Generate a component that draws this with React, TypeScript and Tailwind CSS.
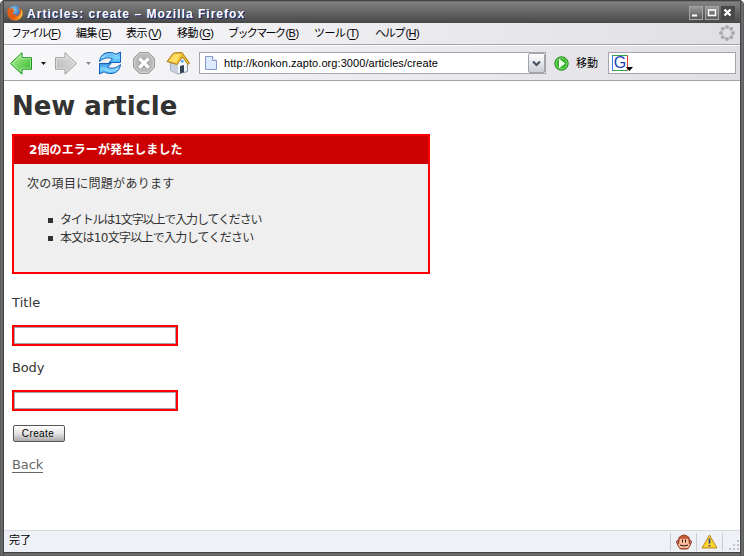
import type { ReactNode } from "react";

const menus: { label: string; k: string; w: string; t: string }[] = [
  { label: "ファイル", k: "F", w: "w-[65px]", t: "tracking-[-2px]" },
  { label: "編集", k: "E", w: "w-[50px]", t: "tracking-[-0.5px]" },
  { label: "表示", k: "V", w: "w-[51px]", t: "tracking-[-0.5px]" },
  { label: "移動", k: "G", w: "w-[51px]", t: "tracking-[-0.5px]" },
  { label: "ブックマーク", k: "B", w: "w-[86px]", t: "tracking-[-1.6px]" },
  { label: "ツール", k: "T", w: "w-[61px]", t: "tracking-[-0.6px]" },
  { label: "ヘルプ", k: "H", w: "w-[50px]", t: "tracking-[-1.2px]" },
];

function FirefoxLogo() {
  return (
    <svg width="16" height="16" viewBox="0 0 16 16" className="shrink-0">
      <defs>
        <radialGradient id="globe" cx=".4" cy=".3" r=".7">
          <stop offset="0" stopColor="#8fd0f2" />
          <stop offset="1" stopColor="#154a9c" />
        </radialGradient>
        <linearGradient id="fox" x1="0" y1="0" x2="1" y2="1">
          <stop offset="0" stopColor="#e8641b" />
          <stop offset=".6" stopColor="#e05a10" />
          <stop offset="1" stopColor="#ffc83a" />
        </linearGradient>
      </defs>
      <circle cx="8" cy="7.5" r="7" fill="url(#globe)" />
      <path d="M1.2 2.5 3 4c1-1 2.8-1 3.8-.4L5.8 5l2.4 1-2.6 1.5c.2 2 2.3 2.6 4.5 1.6L8.8 11c2.6 0 4.3-2.2 4-5.5L11.5 2c3 1.5 4.6 4 4.1 7.2C15 13.200 11.800 15.600 8 15.500 3.600 15.400.5 12.200.5 8c0-2.400.3-4 .7-5.500Z" fill="url(#fox)" />
      <path d="M13.300 4.500c2 3.500.5 7-2.800 8.500 3.500-.4 5.300-3.200 4.600-6.500Z" fill="#ffd34d" />
    </svg>
  );
}

function Arrow({ next = false }: { next?: boolean }) {
  return (
    <svg width="24" height="24" viewBox="0 0 24 24" className={next ? "shrink-0 -scale-x-100" : "shrink-0"}>
      <defs>
        <linearGradient id="ag" x2="1" y2="1">
          <stop stopColor="#b6f59b" /><stop offset="1" stopColor="#2fb526" />
        </linearGradient>
        <linearGradient id="an" x2="1" y2="1">
          <stop stopColor="#e4e4e4" /><stop offset="1" stopColor="#b4b4b4" />
        </linearGradient>
      </defs>
      <path d="M1.500 12.500 13 1.700v5h9.500v11.500H13v5Z" fill={next ? "url(#an)" : "url(#ag)"} stroke={next ? "#a0a0a0" : "#179717"} />
      <path d="M3.200 12.500 12 4.200v3.500h9.500v9.500H12v3.500Z" fill="none" stroke="#fff" strokeOpacity=".45" />
    </svg>
  );
}

function Caret({ fill }: { fill: string }) {
  return <svg width="5" height="3" viewBox="0 0 5 3" className="shrink-0"><path d="M0 0h5L2.500 3Z" fill={fill} /></svg>;
}

function Reload() {
  return (
    <svg width="24" height="24" viewBox="0 0 24 24" className="shrink-0">
      <defs><linearGradient id="rl" x2="0" y2="1"><stop stopColor="#2f8fe4" /><stop offset=".5" stopColor="#7ed4ff" /><stop offset="1" stopColor="#42b4f5" /></linearGradient></defs>
      <g fill="url(#rl)" stroke="#1560b8" strokeLinejoin="round">
        <path d="M1.500 10.500C2 5 6 1.500 11 1.500c3 0 5 .5 7 1.700L22.500 1v10.500H11l3.500-3.700C10.500 6 6 6.500 1.500 10.500Z" />
        <path d="M22.500 13.500C22 19 18 22.500 13 22.500c-3 0-5-.5-7-1.700L1.500 23V12.500H13l-3.500 3.700c4 1.800 8.500 1.300 13-2.700Z" />
      </g>
      <path d="M4 7.200C7 2.800 13 1.500 18 4.700l3.300-1.700M20 16.800c-3 4.200-9 4.500-13.500 1.600" fill="none" stroke="#c9f1ff" strokeOpacity=".6" />
    </svg>
  );
}

function Stop() {
  return (
    <svg width="24" height="24" viewBox="0 0 24 24" className="shrink-0">
      <path d="M7.500 1.500h9l6 6v9l-6 6h-9l-6-6v-9Z" fill="#b8b8b8" stroke="#999" />
      <path d="M8 2.700h8L21.300 8v8L16 21.300H8L2.700 16V8Z" fill="none" stroke="#d5d5d5" />
      <path d="m8 8 8 8m0-8-8 8" stroke="#929292" strokeWidth="5" />
      <path d="m7.500 7.500 9 9m0-9-9 9" stroke="#fff" strokeWidth="3.200" />
    </svg>
  );
}

function Home() {
  return (
    <svg width="24" height="24" viewBox="0 0 24 24" className="shrink-0">
      <path d="M4.500 10.500v9l7.500 3.500 9.500-2.500v-8.500L16.500 5Z" fill="#f1f5fa" stroke="#8795a4" />
      <path d="M4.500 10.500v9L12 23V13Z" fill="#c8d1dc" />
      <path d="M14 22.300v-7.300l4-1v7.200Z" fill="#344256" />
      <path d="M1 10.500 7.500 2l8.500-.5L23.500 12l-1.500 1.500L16.500 6l-5.500 7.500Z" fill="#edb92e" stroke="#ab7d17" strokeLinejoin="round" />
      <path d="M8 3h7l-4.500 9-7.500-2.200Z" fill="#ffdd62" />
      <path d="M15 9h2.500v2.500H15Z" fill="#52adec" />
    </svg>
  );
}

function WinButton({ children }: { children: ReactNode }) {
  return (
    <div className="h-[14px] w-[14px] border border-[#a5a5a5] bg-linear-to-b from-[#989898] to-[#5b5b5b]">
      <svg width="12" height="12" viewBox="0 0 12 12" fill="none" stroke="#fff" strokeWidth="2">{children}</svg>
    </div>
  );
}

function TitleBar() {
  return (
    <header className="flex h-[23px] shrink-0 items-center bg-linear-to-b from-[#444] from-[3%] via-[#828282] via-[8%] to-[#484848] pt-1 pr-[5px] pl-[3px]">
      <div className="-mt-[2px]"><FirefoxLogo /></div>
      <h1 className="ml-1 flex-1 whitespace-pre text-[12px] leading-4 font-bold tracking-[1.020px] text-white [text-shadow:1px_1px_0_#102377]">Articles: create – Mozilla Firefox</h1>
      <div className="-mt-px flex gap-[2px]">
        <WinButton><path d="M2 8.500h5" /></WinButton>
        <WinButton><path d="M2.500 3h7v5.500h-7Z" strokeWidth="1.500" /></WinButton>
        <div className="h-[14px] w-[14px] bg-[#484848] p-px"><svg width="12" height="12" viewBox="0 0 12 12" stroke="#fff" strokeWidth="2.300"><path d="m2.500 2.500 6 6m0-6-6 6" /></svg></div>
      </div>
    </header>
  );
}

function MenuBar() {
  return (
    <nav className="flex h-[22px] shrink-0 items-center border-b border-[#a5a3ab] bg-linear-to-r from-[#f8f8fa] to-[#e1dfe4] pl-[7px] text-[11px] leading-4">
      {menus.map((m) => (
        <div key={m.k} className={`${m.w} -mt-[2px] flex shrink-0 whitespace-nowrap`}>
          <span className={m.t}>{m.label}</span>
          <span className="ml-[1px] tracking-[-0.500px]">(<u className="underline-offset-2">{m.k}</u>)</span>
        </div>
      ))}
      <svg width="16" height="16" viewBox="0 0 16 16" fill="#aaaaad" className="-mt-px mr-[5px] ml-auto">
        <circle cx="8" cy="2" r="2" /><circle cx="12.200" cy="3.800" r="2" /><circle cx="14" cy="8" r="2" /><circle cx="12.200" cy="12.200" r="2" />
        <circle cx="8" cy="14" r="2" /><circle cx="3.800" cy="12.200" r="2" /><circle cx="2" cy="8" r="2" /><circle cx="3.800" cy="3.800" r="2" />
      </svg>
    </nav>
  );
}

function Toolbar() {
  return (
    <div className="flex h-9 shrink-0 items-center border-t border-b border-t-white border-b-[#a5a3ab] bg-linear-to-r from-[#f8f8fa] to-[#e1dfe4] pl-[5px]">
      <Arrow />
      <span className="mx-[8px]"><Caret fill="#111" /></span>
      <Arrow next />
      <span className="mr-[7px] ml-[8px]"><Caret fill="#8b8b8f" /></span>
      <span className="-mt-px"><Reload /></span>
      <span className="-mt-px ml-[10px]"><Stop /></span>
      <span className="-mt-px ml-[10px]"><Home /></span>
      <div className="ml-[9px] flex h-[22px] w-[347px] items-center border border-[#a5a3ab] bg-white pl-[5px]">
        <svg width="12" height="14" viewBox="0 0 12 14" className="shrink-0"><path d="M.5.500h7l4 4v9H.5Z" fill="#dcebff" stroke="#8698c9" /><path d="M7.500.500v4h4" fill="#fff" stroke="#8698c9" /></svg>
        <span className="ml-[7px] text-[11px] tracking-[0.070px]">http://konkon.zapto.org:3000/articles/create</span>
        <div className="ml-auto flex h-5 w-[17px] items-center justify-center rounded-[2px] border border-[#a2a2aa] bg-linear-to-b from-white to-[#cdced6]">
          <svg width="9" height="7" viewBox="0 0 9 7" fill="none" stroke="#465267" strokeWidth="2.200"><path d="m1 1.500 3.500 3.500L8 1.500" /></svg>
        </div>
      </div>
      <svg width="15" height="15" viewBox="0 0 15 15" className="ml-[8px] shrink-0"><circle cx="7.500" cy="7.500" r="6.700" fill="#35b52b" stroke="#158512" /><circle cx="7.500" cy="7.500" r="5.500" fill="none" stroke="#8ce477" /><path d="m5.500 3.500 5 4-5 4Z" fill="#e9ffe3" stroke="#fff" /></svg>
      <span className="ml-[7px] w-[32px] text-[11px]">移動</span>
      <div className="flex h-[22px] w-[128px] shrink-0 items-center border border-[#a5a3ab] bg-white pl-[3px]">
        <div className="flex h-4 w-4 items-center justify-center border border-t-[#35a94a] border-r-[#e03a2f] border-b-[#35a94a] border-l-[#3979e8] text-[16px] leading-[14px] text-[#1742b5]">G</div>
        <svg width="7" height="4" viewBox="0 0 7 4" className="-ml-[2px] translate-y-[6px]"><path d="M0 0h7L3.500 4Z" fill="#000" /></svg>
      </div>
    </div>
  );
}

function Content() {
  return (
    <main className="flex-1 bg-white pl-2 font-['Verdana','DejaVu_Sans','Noto_Sans_CJK_JP',sans-serif] text-[13px] leading-[18px] text-[#333]">
      <h2 className="mt-[8px] h-[33px] text-[26px] leading-[34px] font-bold tracking-[-0.080px] whitespace-nowrap">New article</h2>
      <section className="mt-[12px] h-[140px] w-[418px] border-2 border-[#f00] bg-[#efefef]">
        <h3 className="h-7 bg-[#c00] pl-[15px] text-[12px] leading-[28px] font-bold tracking-[0.100px] text-white">2個のエラーが発生しました</h3>
        <p className="mt-[11px] ml-[13px] h-[18px] text-[12px] tracking-[0.300px]">次の項目に問題があります</p>
        <ul className="mt-[18px] ml-[34px] text-[12px]">
          <li className="flex h-[18px] items-center gap-[7px] tracking-[-1.130px]"><i className="h-[5px] w-[5px] bg-[#333]" />タイトルは1文字以上で入力してください</li>
          <li className="flex h-[18px] items-center gap-[7px] tracking-[-0.720px]"><i className="h-[5px] w-[5px] bg-[#333]" />本文は10文字以上で入力してください</li>
        </ul>
      </section>
      <div className="mt-[20px] h-[18px] tracking-[0.100px]">Title</div>
      <input aria-label="Title" className="mt-[13px] block h-[21px] w-[166px] border-2 border-[#f00] bg-white outline outline-[#a5a3ab] -outline-offset-[3px]" />
      <div className="mt-[13px] h-[18px] tracking-[-0.150px]">Body</div>
      <input aria-label="Body" className="mt-[13px] block h-[21px] w-[166px] border-2 border-[#f00] bg-white outline outline-[#a5a3ab] -outline-offset-[3px]" />
      <button className="mt-[14px] ml-[1px] flex h-[17px] w-[52px] items-center justify-center rounded-[2px] border border-[#555] bg-linear-to-b from-white via-[#e4e4e4] to-[#aaa] pr-[2px] font-['Liberation_Sans','Noto_Sans_CJK_JP',sans-serif] text-[10px] leading-3 tracking-[0.400px] text-black">Create</button>
      <a className="mt-[14px] block h-[17px] w-[31px] border-b border-[#666] leading-[18px] tracking-[-0.100px] text-[#666]">Back</a>
    </main>
  );
}

function StatusBar() {
  return (
    <footer className="flex h-[22px] shrink-0 items-center border-t border-[#d8dadd] bg-[#eef2f7] pl-[5px] text-[11px]">
      <span className="-mt-[3px]">完了</span>
      <div className="ml-auto flex h-[18px] w-[26px] items-center justify-center border-l border-[#cbccd2]">
        <svg width="16" height="16" viewBox="0 0 16 16"><circle cx="2.300" cy="8" r="1.800" fill="#e89a78" stroke="#8a3d25" /><circle cx="13.700" cy="8" r="1.800" fill="#e89a78" stroke="#8a3d25" /><path d="M3 3.500Q8-1.500 13 3.500l.5 4.500 1 3-3 4h-7l-3-4 1-3Z" fill="#c25a38" stroke="#8a3d25" /><path d="M3.500 6Q5 3.500 8 5 11 3.500 12.500 6v3l1.500 2-2.500 3h-7L2 11l1.500-2Z" fill="#ffbf9c" /><path d="M6.500 5.500v3m3-3v3m-5.500 2.500q4 2 8 0" fill="none" stroke="#20100c" /></svg>
      </div>
      <div className="flex h-[18px] w-[26px] items-center justify-center border-l border-[#cbccd2]">
        <svg width="17" height="15" viewBox="0 0 17 15"><path d="m8.500 1 7.500 13H1Z" fill="#ffd42f" stroke="#b78522" strokeLinejoin="round" /><path d="M8.500 4.500v5m0 1.500v1.500" stroke="#354e87" strokeWidth="1.800" /></svg>
      </div>
      <div className="flex h-[18px] w-[18px] items-end justify-end border-l border-[#cbccd2]">
        <svg width="12" height="12" viewBox="0 0 12 12" fill="#c5c6c9"><path d="M9 1h2v2H9ZM9 5h2v2H9ZM9 9h2v2H9ZM5 5h2v2H5ZM5 9h2v2H5ZM1 9h2v2H1Z" /></svg>
      </div>
    </footer>
  );
}

export default function App() {
  return (
    <div className="h-[556px] w-[744px] bg-white">
      <div className="flex h-full w-full overflow-hidden rounded-t-[5px] bg-[#555] font-['Liberation_Sans','Noto_Sans_CJK_JP',sans-serif] text-black">
        <div className="w-1 shrink-0 bg-linear-to-r from-[#555] via-[#777] to-[#333]" />
        <div className="flex min-w-0 flex-1 flex-col">
          <TitleBar />
          <MenuBar />
          <Toolbar />
          <Content />
          <StatusBar />
          <div className="h-1 shrink-0 bg-linear-to-b from-[#333] via-[#777] to-[#555]" />
        </div>
        <div className="w-1 shrink-0 bg-linear-to-r from-[#333] via-[#777] to-[#555]" />
      </div>
    </div>
  );
}
